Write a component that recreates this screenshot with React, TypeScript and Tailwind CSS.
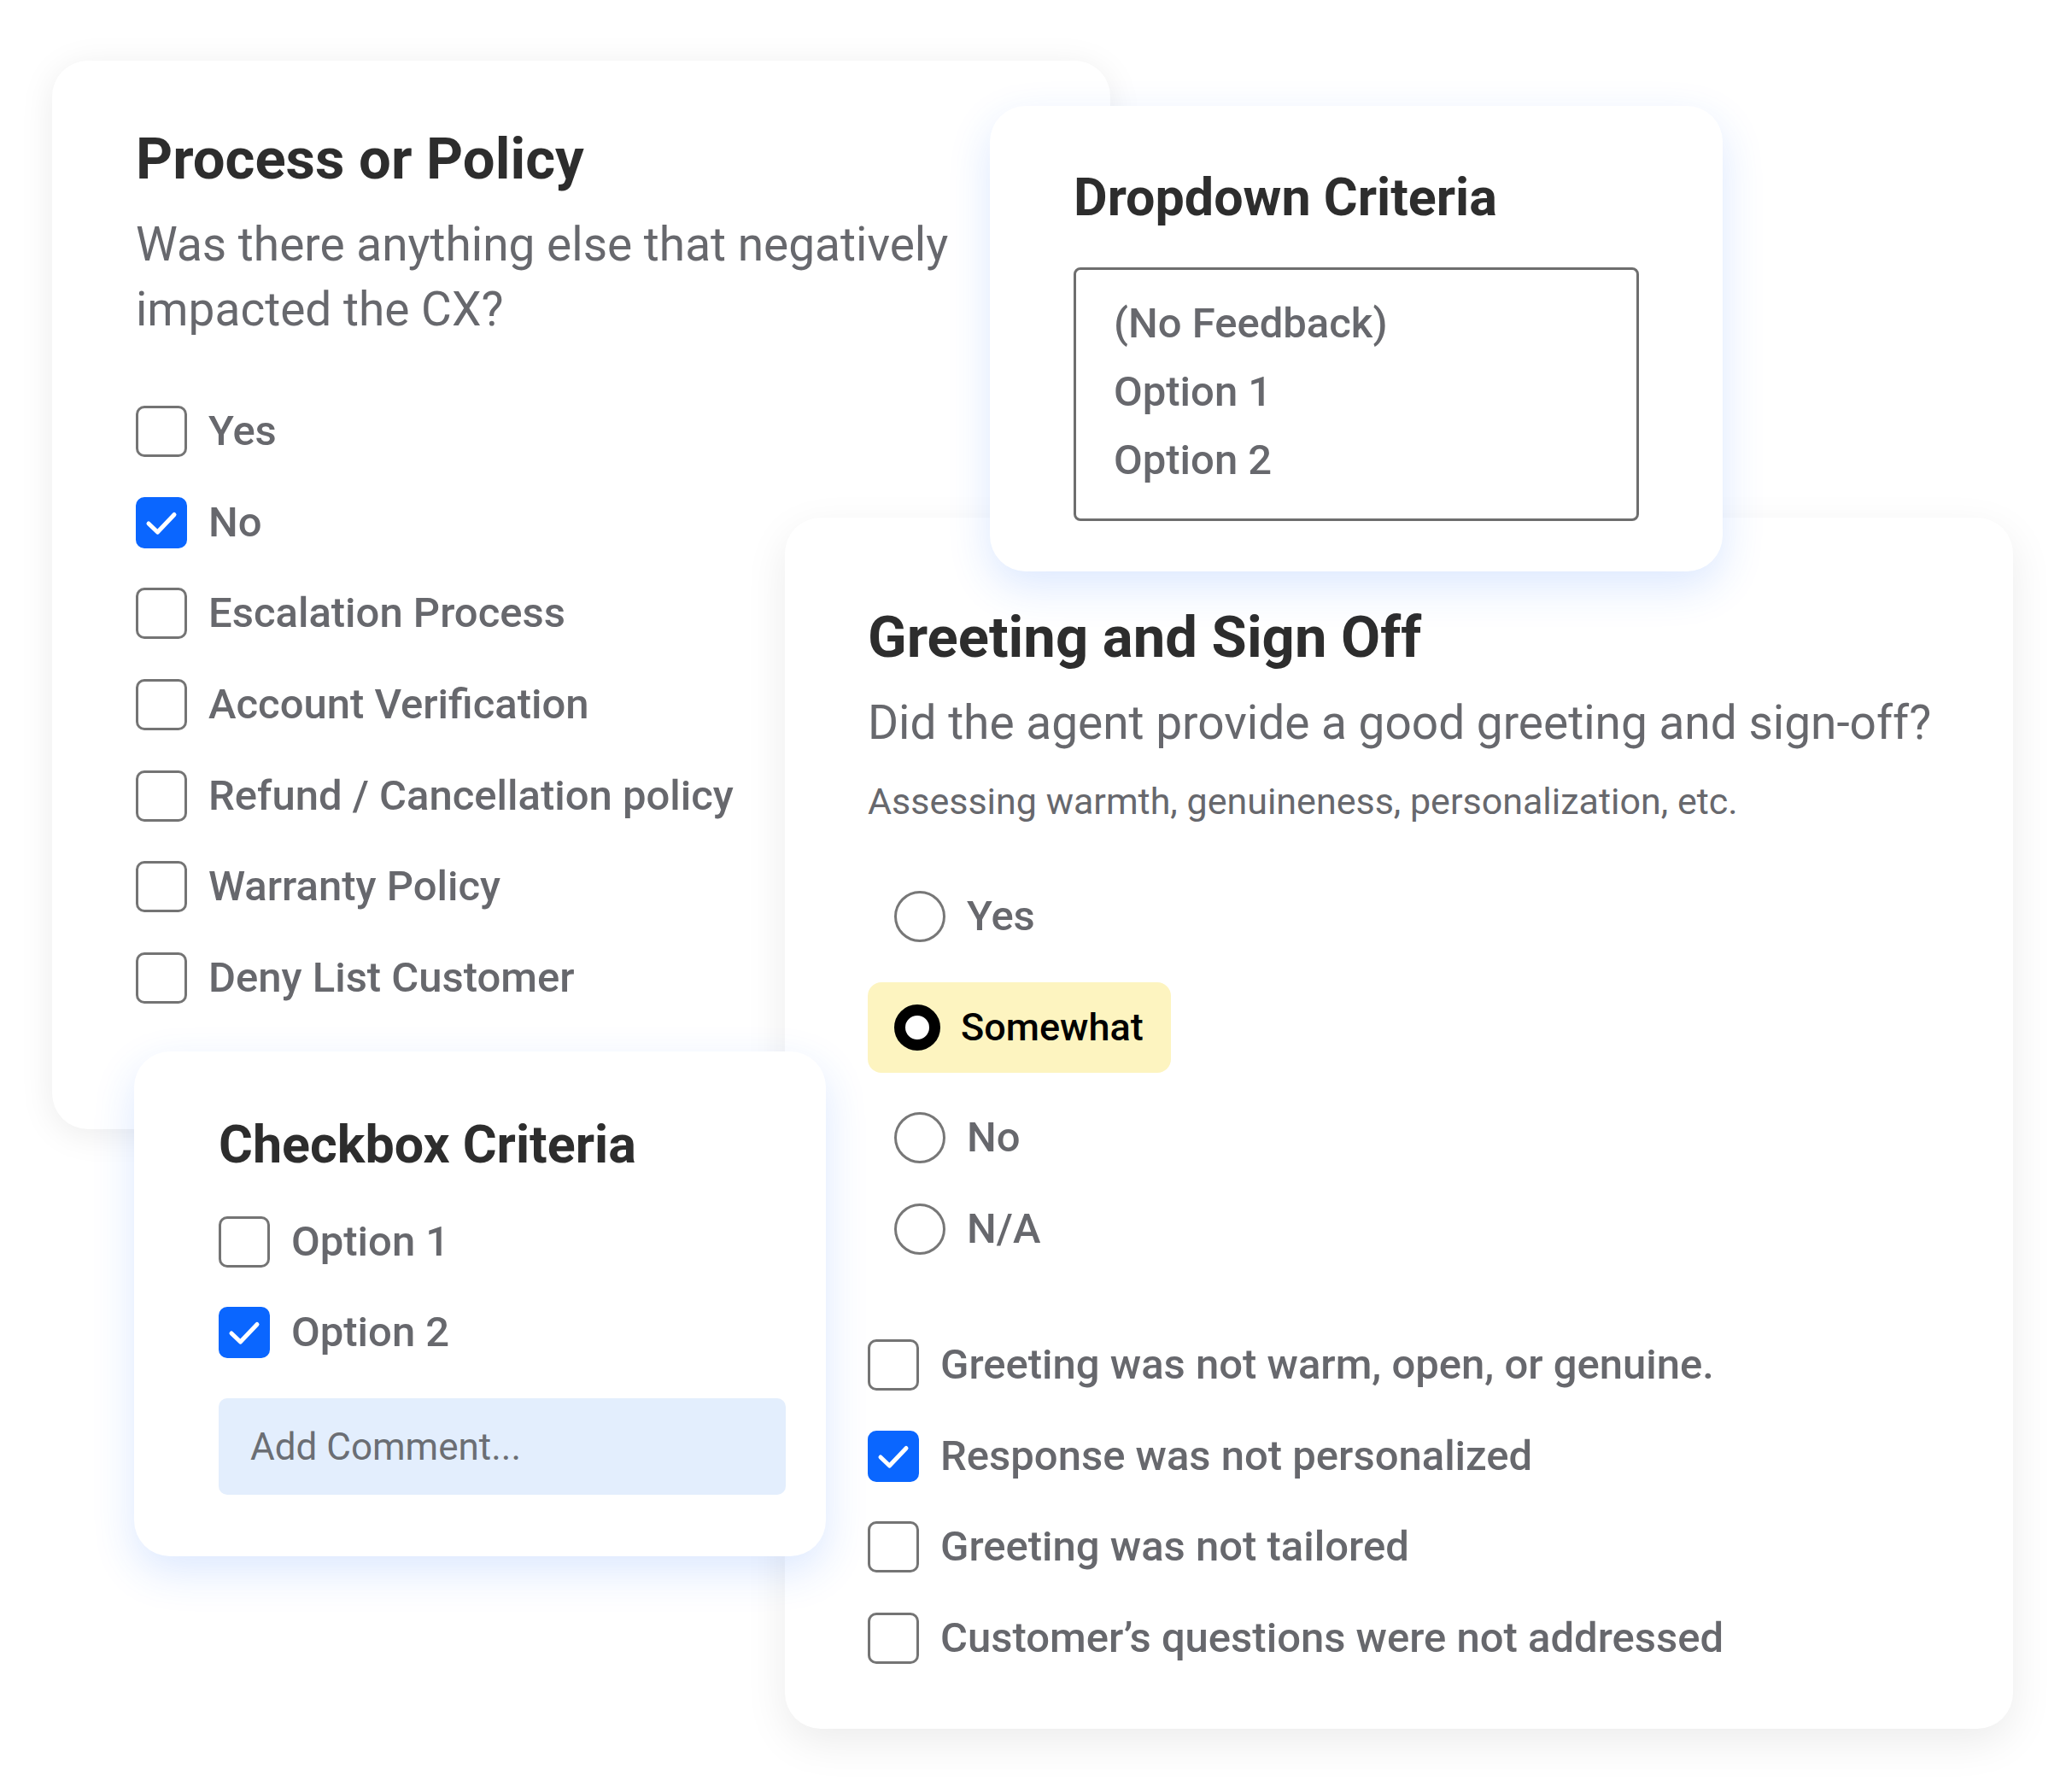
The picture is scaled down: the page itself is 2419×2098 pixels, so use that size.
import { ReactNode } from "react";

const Check = ({ checked }: { checked?: boolean }) =>
  checked ? (
    <span className="flex h-[60px] w-[60px] shrink-0 items-center justify-center rounded-[10px] bg-[#0a66ff]">
      <svg viewBox="0 0 60 60" className="h-[60px] w-[60px]">
        <path
          d="M15 31 L25.5 41 L45 20.5"
          fill="none"
          stroke="#fff"
          strokeWidth="5"
          strokeLinecap="round"
          strokeLinejoin="round"
        />
      </svg>
    </span>
  ) : (
    <span className="h-[60px] w-[60px] shrink-0 rounded-[10px] border-[3px] border-[#747474] bg-white" />
  );

const CheckRow = ({ label, checked }: { label: string; checked?: boolean }) => (
  <div className="flex h-[60px] items-center gap-[25px]">
    <Check checked={checked} />
    <span className="text-[49px] font-medium leading-[60px] text-[#67686d]">{label}</span>
  </div>
);

const Radio = ({ label }: { label: string }) => (
  <div className="flex h-[60px] items-center gap-[25px] pl-[31px]">
    <span className="h-[60px] w-[60px] shrink-0 rounded-full border-[3px] border-[#777777]" />
    <span className="text-[49px] font-medium leading-[60px] text-[#67686d]">{label}</span>
  </div>
);

const Card = ({ className, children }: { className: string; children: ReactNode }) => (
  <div className={"absolute rounded-[42px] bg-white " + className}>{children}</div>
);

export default function App() {
  return (
    <div className="relative h-[2098px] w-[2419px] overflow-hidden bg-white font-['Roboto',sans-serif]">
      {/* Process or Policy */}
      <Card className="left-[61px] top-[71px] h-[1251px] w-[1239px] pl-[98px] pt-[82px] shadow-[0_6px_40px_rgba(0,0,0,0.08)]">
        <h2 className="text-[67px] font-bold leading-[67px] text-[#2d2d2d]">Process or Policy</h2>
        <p className="mt-[28px] text-[55px] leading-[76px] text-[#67686d]">
          Was there anything else that negatively
          <br />
          impacted the CX?
        </p>
        <div className="mt-[75px] flex flex-col gap-[46.7px]">
          <CheckRow label="Yes" />
          <CheckRow label="No" checked />
          <CheckRow label="Escalation Process" />
          <CheckRow label="Account Verification" />
          <CheckRow label="Refund / Cancellation policy" />
          <CheckRow label="Warranty Policy" />
          <CheckRow label="Deny List Customer" />
        </div>
      </Card>

      {/* Greeting and Sign Off */}
      <Card className="left-[919px] top-[606px] h-[1418px] w-[1438px] pl-[97px] pt-[107px] shadow-[0_16px_50px_rgba(0,0,0,0.08)]">
        <h2 className="text-[67px] font-bold leading-[67px] text-[#2d2d2d]">Greeting and Sign Off</h2>
        <p className="mt-[28px] text-[55px] leading-[76px] text-[#67686d]">
          Did the agent provide a good greeting and sign-off?
        </p>
        <p className="mt-[23px] text-[43px] leading-[63px] text-[#67686d]">
          Assessing warmth, genuineness, personalization, etc.
        </p>
        <div className="mt-[73px] flex flex-col items-start gap-[46.7px]">
          <Radio label="Yes" />
          <div className="flex h-[106px] w-[355px] items-center gap-[24px] rounded-[16px] bg-[#fdf4c0] pl-[31px]">
            <span className="h-[54px] w-[54px] shrink-0 rounded-full border-[13px] border-black bg-white" />
            <span className="text-[45px] font-medium leading-[60px] text-black">Somewhat</span>
          </div>
          <Radio label="No" />
          <Radio label="N/A" />
        </div>
        <div className="mt-[99px] flex flex-col gap-[46.7px]">
          <CheckRow label="Greeting was not warm, open, or genuine." />
          <CheckRow label="Response was not personalized" checked />
          <CheckRow label="Greeting was not tailored" />
          <CheckRow label="Customer’s questions were not addressed" />
        </div>
      </Card>

      {/* Dropdown Criteria */}
      <Card className="left-[1159px] top-[124px] h-[545px] w-[858px] pl-[98px] pt-[77px] shadow-[0_18px_50px_rgba(40,110,255,0.16)]">
        <h2 className="text-[61px] font-bold leading-[61px] text-[#2d2d2d]">Dropdown Criteria</h2>
        <div className="mt-[51px] flex h-[297px] w-[662px] flex-col rounded-[8px] border-[3px] border-[#6e6e6e] pl-[44px] pt-[23px]">
          {["(No Feedback)", "Option 1", "Option 2"].map((o) => (
            <span key={o} className="text-[49px] font-medium leading-[80px] text-[#67686d]">
              {o}
            </span>
          ))}
        </div>
      </Card>

      {/* Checkbox Criteria */}
      <Card className="left-[157px] top-[1231px] h-[591px] w-[810px] pl-[99px] pt-[79px] shadow-[0_18px_50px_rgba(40,110,255,0.16)]">
        <h2 className="text-[61px] font-bold leading-[61px] text-[#2d2d2d]">Checkbox Criteria</h2>
        <div className="mt-[53px] flex flex-col gap-[46px]">
          <CheckRow label="Option 1" />
          <CheckRow label="Option 2" checked />
        </div>
        <div className="mt-[47px] flex h-[113px] w-[664px] items-center rounded-[10px] bg-[#e3eefd] pl-[37px]">
          <span className="text-[44px] leading-[60px] text-[#6b6e74]">Add Comment...</span>
        </div>
      </Card>
    </div>
  );
}
